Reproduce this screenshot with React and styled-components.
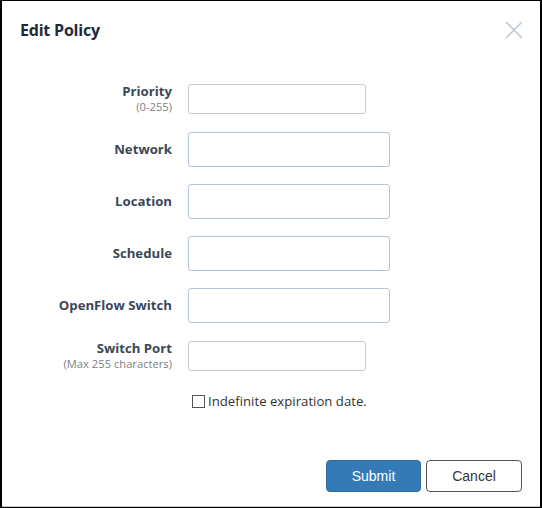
import React, { useState } from 'react';
import styled, { createGlobalStyle } from 'styled-components';

const GlobalStyle = createGlobalStyle`
  html, body {
    margin: 0;
    padding: 0;
    background: #fff;
  }
  * {
    box-sizing: border-box;
  }
`;

const fields = [
  { label: 'Priority', hint: '(0-255)', size: 'small' },
  { label: 'Network', size: 'large' },
  { label: 'Location', size: 'large' },
  { label: 'Schedule', size: 'large' },
  { label: 'OpenFlow Switch', size: 'large' },
  { label: 'Switch Port', hint: '(Max 255 characters)', size: 'small' },
];

const App = () => {
  const [values, setValues] = useState({});
  const [indefinite, setIndefinite] = useState(false);

  return (
    <>
      <GlobalStyle />
      <Dialog>
        <Header>
          <Title>Edit Policy</Title>
          <CloseButton aria-label="Close">
            <svg width="18" height="18" viewBox="0 0 18 18">
              <path d="M1 1 L17 17 M17 1 L1 17" stroke="#c3cbd6" strokeWidth="1.6" />
            </svg>
          </CloseButton>
        </Header>

        <Form>
          {fields.map((f) => (
            <Row key={f.label} $small={f.size === 'small'}>
              <Label>
                {f.label}
                {f.hint && <Hint>{f.hint}</Hint>}
              </Label>
              <Input
                $small={f.size === 'small'}
                value={values[f.label] || ''}
                onChange={(e) => setValues({ ...values, [f.label]: e.target.value })}
              />
            </Row>
          ))}
          <CheckRow>
            <Check
              type="checkbox"
              checked={indefinite}
              onChange={(e) => setIndefinite(e.target.checked)}
            />
            Indefinite expiration date.
          </CheckRow>
        </Form>

        <Footer>
          <Button $primary>Submit</Button>
          <Button>Cancel</Button>
        </Footer>
      </Dialog>
    </>
  );
};

export default App;

const Dialog = styled.div`
  width: 542px;
  height: 508px;
  display: flex;
  flex-direction: column;
  border-top: 1px solid #000;
  border-left: 2px solid #000;
  border-right: 2px solid #000;
  border-bottom: 1px solid #000;
  box-shadow: inset 0 -1px 0 #c8c8c8;
  font-family: 'Open Sans', 'Noto Sans', sans-serif;
  color: #333;
`;

const Header = styled.div`
  display: flex;
  align-items: center;
  justify-content: space-between;
  padding: 19px 17px 0 18px;
`;

const Title = styled.h1`
  margin: 0;
  font-size: 16px;
  font-weight: 700;
  line-height: 20px;
  color: #1f2a38;
  letter-spacing: -0.2px;
`;

const CloseButton = styled.button`
  border: none;
  background: none;
  padding: 0;
  width: 18px;
  height: 18px;
  display: flex;
  cursor: pointer;
`;

const Form = styled.div`
  display: flex;
  flex-direction: column;
  margin-top: 43px;
`;

const Row = styled.div`
  display: grid;
  grid-template-columns: 170px auto;
  column-gap: 16px;
  align-items: center;
  margin-bottom: ${(p) => (p.$small ? '18px' : '17px')};
`;

const Label = styled.label`
  display: flex;
  flex-direction: column;
  align-items: flex-end;
  font-size: 13.2px;
  font-weight: 700;
  line-height: 17px;
  color: #3b4757;
`;

const Hint = styled.span`
  font-size: 11.2px;
  font-weight: 400;
  line-height: 14px;
  color: #808080;
`;

const Input = styled.input`
  width: ${(p) => (p.$small ? '178px' : '202px')};
  height: ${(p) => (p.$small ? '30px' : '35px')};
  border: 1px solid ${(p) => (p.$small ? '#c9c9c9' : '#b7c4d2')};
  border-radius: 3px;
  padding: 0 8px;
  font: inherit;
  font-size: 13px;
  outline: none;
`;

const CheckRow = styled.label`
  display: flex;
  align-items: center;
  gap: 3px;
  margin: 3px 0 0 190px;
  font-size: 13.2px;
  color: #333;
`;

const Check = styled.input`
  appearance: none;
  width: 13px;
  height: 13px;
  margin: 0;
  border: 1px solid #555;
  background: #fff;
  border-radius: 0;
`;

const Footer = styled.div`
  margin-top: auto;
  display: flex;
  justify-content: flex-end;
  gap: 5px;
  padding: 0 18px 15px 0;
`;

const Button = styled.button`
  width: ${(p) => (p.$primary ? '95px' : '96px')};
  height: 32px;
  border-radius: 4px;
  font-family: 'Liberation Sans', Arial, sans-serif;
  font-size: 14px;
  cursor: pointer;
  border: 1px solid ${(p) => (p.$primary ? '#2e6da4' : '#555')};
  background: ${(p) => (p.$primary ? '#337ab7' : '#fff')};
  color: ${(p) => (p.$primary ? '#fff' : '#333')};
`;
